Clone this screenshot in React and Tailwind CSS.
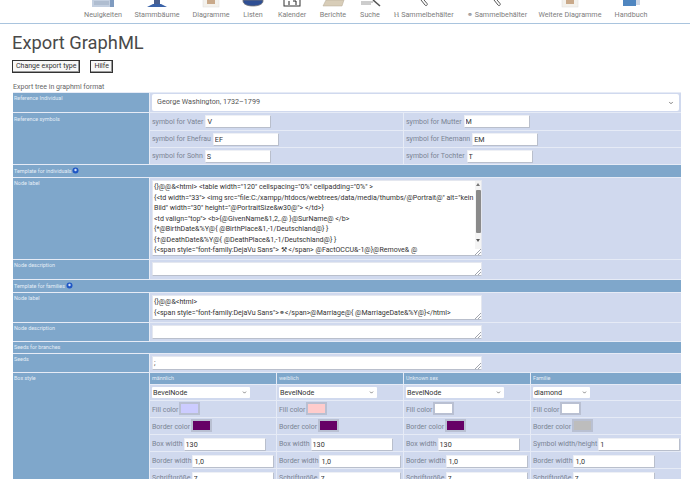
import React from "react";
import { ChevronDown } from "lucide-react";

const navItems = [
  { label: "Neuigkeiten", w: "w-[54px]", icon: "news" },
  { label: "Stammbäume", w: "w-[54px]", icon: "tree" },
  { label: "Diagramme", w: "w-[54px]", icon: "chart" },
  { label: "Listen", w: "w-[30px]", icon: "list" },
  { label: "Kalender", w: "w-[48px]", icon: "cal" },
  { label: "Berichte", w: "w-[34px]", icon: "report" },
  { label: "Suche", w: "w-[40px]", icon: "search" },
  { label: "Ⲏ Sammelbehälter", w: "w-[68px]", icon: "clip" },
  { label: "⚭ Sammelbehälter", w: "w-[78px]", icon: "clip" },
  { label: "Weitere Diagramme", w: "w-[68px]", icon: "chart" },
  { label: "Handbuch", w: "w-[54px]", icon: "book" },
];

const NavIcon = ({ type }) => {
  return (
    <svg width="24" height="8" viewBox="0 0 24 8" className="block shrink-0">
      {type === "news" && (
        <>
          <rect x="1" y="0" width="22" height="7" fill="#c3cfe0" />
          <path d="M3 2h15M3 4h15" stroke="#8a9bb3" strokeWidth="0.7" />
          <rect x="19" y="0" width="4" height="7" fill="#7f9bc0" />
        </>
      )}
      {type === "tree" && (
        <>
          <rect x="9" y="0" width="6" height="5" fill="#4a5f8e" />
          <path d="M2 7l6-3h8l6 3z" fill="#3a62a8" />
        </>
      )}
      {type === "chart" && (
        <>
          <rect x="4" y="-1" width="16" height="8" fill="#f3f1ec" stroke="#dcdcdc" strokeWidth="0.5" />
          <rect x="8" y="0" width="8" height="4" fill="#c9a98a" />
        </>
      )}
      {type === "list" && <path d="M2 0h20v1c0 3-4 5-10 5S2 4 2 1z" fill="#2f4f94" stroke="#777" strokeWidth="0.8" />}
      {type === "cal" && (
        <>
          <rect x="4" y="-2" width="16" height="8" fill="#fff" stroke="#333" strokeWidth="1" />
          <path d="M9 1v4M13 1h3v4" stroke="#222" strokeWidth="1" fill="none" />
        </>
      )}
      {type === "report" && <path d="M5 0h18l-2 6H2z" fill="#d8cdb8" stroke="#b5aa96" strokeWidth="0.5" />}
      {type === "search" && (
        <>
          <path d="M3 2h12M3 4h10" stroke="#9a9a9a" strokeWidth="1" />
          <path d="M15 0l7 6" stroke="#555" strokeWidth="1.600" />
        </>
      )}
      {type === "clip" && <path d="M9 0l4 5c1 1.500 3 0 2-1.500L12 0" fill="none" stroke="#555" strokeWidth="1" />}
      {type === "book" && (
        <>
          <rect x="4" y="-1" width="13" height="7" fill="#4f86c0" />
          <rect x="17" y="0" width="4" height="5" fill="#cfd8e6" />
        </>
      )}
    </svg>
  );
};

const fieldLabel = "mt-[1px] text-[7px] leading-none text-[#7b8494] whitespace-nowrap";
const inputCls =
  "h-[13px] bg-white px-[1px] text-[7.200px] text-[#333] outline-none border border-[#eef0f5] border-b-[#b9bfcc] border-r-[#b9bfcc] rounded-[1px]";

const LeftCell = ({ children, className = "" }) => (
  <div className={"w-[136px] shrink-0 bg-[#7fa7cb] px-[1px] py-[2px] text-[5.400px] leading-[7px] text-[#e4edf6] " + className}>{children}</div>
);

const Header = ({ children, h = "h-[12px]" }) => (
  <div className={"flex items-center gap-[1px] bg-[#7fa7cb] px-[1px] text-[5.400px] text-[#e4edf6] " + h}>{children}</div>
);

const Symbol = ({ label, value }) => (
  <div className="flex h-full items-center gap-[2px] pl-[2px]">
    <span className={fieldLabel}>{label}</span>
    <input readOnly value={value} className={inputCls + " w-[66px]"} />
  </div>
);

const SymbolRow = ({ h, left, right }) => (
  <div className={"flex gap-[1px] " + h}>
    <div className="w-[253px] bg-[#d0d9ee]">{left}</div>
    <div className="flex-1 bg-[#d0d9ee]">{right}</div>
  </div>
);

const Area = ({ h, value, scroll }) => (
  <div className="relative w-[330px]">
    <textarea
      readOnly
      value={value}
      className={
        "block w-[330px] resize bg-white pl-[1px] pr-[4px] py-[1px] text-[7.050px] leading-[10.500px] text-[#333] outline-none overflow-hidden border border-[#e4e7ef] border-b-[#b9bfcc] [&::-webkit-resizer]:bg-[linear-gradient(135deg,transparent_78%,#a0a4ad_78%,#a0a4ad_82%,transparent_82%,transparent_89%,#a0a4ad_89%,#a0a4ad_93%,transparent_93%)] " +
        h
      }
    />
    {scroll && (
      <div className="absolute right-[1px] top-[1px] flex h-[68px] w-[6px] flex-col items-center bg-[#f4f4f4]">
        <span className="mt-[2px] h-0 w-0 border-x-[2px] border-b-[3px] border-x-transparent border-b-[#777]" />
        <span className="mt-[4px] h-[43px] w-[5px] rounded-[1px] bg-[#8a8a8a]" />
        <span className="mt-[6px] h-0 w-0 border-x-[2px] border-t-[3px] border-x-transparent border-t-[#555]" />
      </div>
    )}
  </div>
);

const AreaRow = ({ label, h, rowH, value, scroll }) => (
  <div className={"flex gap-[1px] " + rowH}>
    <LeftCell>{label}</LeftCell>
    <div className="flex-1 bg-[#d0d9ee] pl-[2px] pt-[2px]">
      <Area h={h} value={value} scroll={scroll} />
    </div>
  </div>
);

const Swatch = ({ color }) => (
  <span className={"-mt-[3px] block h-[13px] w-[21px] border-2 border-[#b9c0d2] " + color} />
);

const Dropdown = ({ value, w }) => (
  <div className={"relative " + w}>
    <select
      defaultValue={value}
      className="block h-[11px] w-full appearance-none rounded-[1px] bg-white pl-[1px] text-[7.200px] leading-none text-[#333] outline-none"
    >
      <option>{value}</option>
    </select>
    <ChevronDown className="absolute right-[3px] top-[3px] h-[5px] w-[5px] text-[#444]" strokeWidth={3} />
  </div>
);

const BoxRow = ({ label, children }) => (
  <div className="flex h-[16px] items-center gap-[1px] bg-[#d0d9ee] pl-[2px] pt-[2px]">
    <span className={fieldLabel}>{label}</span>
    {children}
  </div>
);

const BoxColumn = ({ title, shape, sw, fill, border, widthLabel, width, className }) => (
  <div className={"flex flex-col gap-[1px] " + className}>
    <div className="flex h-[11px] items-center bg-[#7fa7cb] px-[2px] text-[5.400px] text-[#e4edf6]">{title}</div>
    <div className="flex h-[15px] items-center bg-[#d0d9ee] pl-[2px]">
      <Dropdown value={shape} w={sw} />
    </div>
    <BoxRow label="Fill color"><Swatch color={fill} /></BoxRow>
    <BoxRow label="Border color"><Swatch color={border} /></BoxRow>
    <BoxRow label={widthLabel}>
      <input readOnly value={width} className={inputCls + " w-[82px]"} />
    </BoxRow>
    <BoxRow label="Border width">
      <input readOnly value="1,0" className={inputCls + " w-[82px]"} />
    </BoxRow>
    <BoxRow label="Schriftgröße">
      <input readOnly value="7" className={inputCls + " w-[82px]"} />
    </BoxRow>
  </div>
);

const individualLabel = `{}@@&<html> <table width="120" cellspacing="0%" cellpadding="0%" >
{<td width="33"> <img src="file:C:/xampp/htdocs/webtrees/data/media/thumbs/@Portrait@" alt="kein
Bild" width="30" height="@PortraitSize&w30@"> </td>}
<td valign="top"> <b>{@GivenName&1,2,.@ }@SurName@ </b>
{*@BirthDate&%Y@{ @BirthPlace&1,-1/Deutschland@} }
{†@DeathDate&%Y@{ @DeathPlace&1,-1/Deutschland@} }
{<span style="font-family:DejaVu Sans"> ⚒ </span> @FactOCCU&-1@}@Remove& @`;

const familyLabel = `{}@@&<html>
{<span style="font-family:DejaVu Sans">⚭</span>@Marriage@{ @MarriageDate&%Y@}</html>`;

const InfoDot = () => (
  <svg width="7" height="7" viewBox="0 0 7 7" className="-mt-[2px]">
    <circle cx="3.500" cy="3.500" r="3" fill="#1f56c4" />
    <circle cx="3.500" cy="3" r="1.200" fill="#cfe0fb" />
  </svg>
);

const btnCls =
  "h-[13px] border border-[#333] bg-[#f8f8f8] px-[3px] text-[7px] leading-none text-[#333] shadow-[inset_-1px_-1px_0_#999]";

export default function App() {
  return (
    <div className="h-[479px] w-[690px] overflow-hidden bg-white font-['Roboto','Noto_Sans',sans-serif]">
      <nav className="flex h-[24px] border-b-[1.500px] border-[#a9c4de] pl-[76px]">
        {navItems.map((item) => (
          <div key={item.label} className={"flex flex-col items-center " + item.w}>
            <NavIcon type={item.icon} />
            <span className="mt-[2px] whitespace-nowrap text-[7.200px] leading-[10px] text-[#7d7d7d]">{item.label}</span>
          </div>
        ))}
      </nav>

      <div className="px-[12px] pt-[6px]">
        <h1 className="text-[18.300px] font-normal leading-[26px] text-[#4a4a4a]">Export GraphML</h1>
        <div className="mt-[4px] flex gap-[10px]">
          <button className={btnCls}>Change export type</button>
          <button className={btnCls}>Hilfe</button>
        </div>
        <p className="mt-[9px] pl-[1px] text-[7px] leading-[10px] text-[#666]">Export tree in graphml format</p>
      </div>

      <div className="ml-[13px] flex w-[668px] flex-col gap-[1px] bg-[#e6ebf6] pt-[1px]">
        <div className="flex h-[19px] gap-[1px]">
          <LeftCell>Reference Individual</LeftCell>
          <div className="relative flex-1 bg-[#d0d9ee] px-[2px] py-[1px]">
            <select
              defaultValue="gw"
              className="block h-[17px] w-full appearance-none rounded-[2px] bg-white pl-[5px] text-[7.200px] text-[#555] outline-none"
            >
              <option value="gw">George Washington, 1732–1799</option>
            </select>
            <ChevronDown className="absolute right-[7px] top-[7px] h-[6px] w-[6px] text-[#555]" strokeWidth={3} />
          </div>
        </div>

        <div className="flex gap-[1px]">
          <LeftCell className="pt-[3px]">Reference symbols</LeftCell>
          <div className="flex flex-1 flex-col gap-[1px]">
            <SymbolRow h="h-[17px]" left={<Symbol label="symbol for Vater" value="V" />} right={<Symbol label="symbol for Mutter" value="M" />} />
            <SymbolRow h="h-[16px]" left={<Symbol label="symbol for Ehefrau" value="EF" />} right={<Symbol label="symbol for Ehemann" value="EM" />} />
            <SymbolRow h="h-[16px]" left={<Symbol label="symbol for Sohn" value="S" />} right={<Symbol label="symbol for Tochter" value="T" />} />
          </div>
        </div>

        <Header>Template for individuals <InfoDot /></Header>
        <AreaRow label="Node label" rowH="h-[81px]" h="h-[76px]" value={individualLabel} scroll />
        <AreaRow label="Node description" rowH="h-[19px]" h="h-[14px]" value="" />
        <Header>Template for families <InfoDot /></Header>
        <AreaRow label="Node label" rowH="h-[29px]" h="h-[25px]" value={familyLabel} />
        <AreaRow label="Node description" rowH="h-[18px]" h="h-[14px]" value="" />
        <Header h="h-[11px]">Seeds for branches</Header>
        <AreaRow label="Seeds" rowH="h-[18px]" h="h-[14px]" value=";" />

        <div className="flex gap-[1px]">
          <LeftCell>Box style</LeftCell>
          <div className="flex flex-1 gap-[1px]">
            <BoxColumn className="w-[126px]" title="männlich" shape="BevelNode" sw="w-[98px]" fill="bg-[#ccccff]" border="bg-[#660066]" widthLabel="Box width" width="130" />
            <BoxColumn className="w-[126px]" title="weiblich" shape="BevelNode" sw="w-[98px]" fill="bg-[#ffcccc]" border="bg-[#660066]" widthLabel="Box width" width="130" />
            <BoxColumn className="w-[126px]" title="Unknown sex" shape="BevelNode" sw="w-[98px]" fill="bg-white" border="bg-[#660066]" widthLabel="Box width" width="130" />
            <BoxColumn className="flex-1" title="Familie" shape="diamond" sw="w-[57px]" fill="bg-white" border="bg-[#bdbdbd]" widthLabel="Symbol width/height" width="1" />
          </div>
        </div>
      </div>
    </div>
  );
}
